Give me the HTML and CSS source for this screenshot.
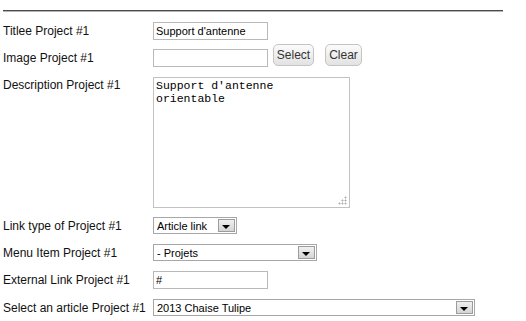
FILE: index.html
```html
<!DOCTYPE html>
<html lang="en">
<head>
    <meta charset="UTF-8">
    <title>Project #1</title>
    <link rel="stylesheet" href="styles.css">
</head>
<body>
    <div class="rule"></div>

    <form class="params">
        <div class="row row-title">
            <label for="title1">Titlee Project #1</label>
            <input type="text" id="title1" class="text-field" value="Support d'antenne">
        </div>

        <div class="row row-image">
            <label for="image1">Image Project #1</label>
            <input type="text" id="image1" class="text-field">
            <button type="button" class="btn btn-select">Select</button>
            <button type="button" class="btn btn-clear">Clear</button>
        </div>

        <div class="row row-desc">
            <label for="desc1">Description Project #1</label>
            <div class="area-wrap">
                <textarea id="desc1" class="area">Support d'antenne
orientable</textarea>
                <span class="grip"></span>
            </div>
        </div>

        <div class="row">
            <label for="linktype1">Link type of Project #1</label>
            <span class="combo combo-small">
                <select id="linktype1"><option>Article link</option></select>
            </span>
        </div>

        <div class="row">
            <label for="menu1">Menu Item Project #1</label>
            <span class="combo combo-mid">
                <select id="menu1"><option>- Projets</option></select>
            </span>
        </div>

        <div class="row">
            <label for="ext1">External Link Project #1</label>
            <input type="text" id="ext1" class="text-field" value="#">
        </div>

        <div class="row">
            <label for="article1">Select an article Project #1</label>
            <span class="combo combo-wide">
                <select id="article1"><option>2013 Chaise Tulipe</option></select>
            </span>
        </div>
    </form>
</body>
</html>
```

FILE: styles.css
```css
body {
    margin: 0;
    padding: 0 0 0 3px;
    background-color: #ffffff;
    color: #000000;
    font-family: "Liberation Sans", Arial, sans-serif;
    font-size: 12px;
}
.rule {
    width: 500px;
    margin-top: 10px;
    border-top: 1px solid #4a4a4a;
    border-bottom: 1px solid #b5b5b5;
}
.params {
    margin-top: 10px;
}
.row {
    display: flex;
    align-items: center;
    margin-bottom: 10px;
}
.row label {
    width: 150px;
    flex-shrink: 0;
    line-height: 14px;
    color: #111;
}
.row-title {
    margin-bottom: 4px;
}
.row-image {
    align-items: flex-end;
}
.row-image label {
    padding-bottom: 2px;
}
.row-desc {
    align-items: flex-start;
    margin-bottom: 9px;
}
.row-desc label {
    padding-top: 1px;
}
.text-field {
    display: block;
    width: 115px;
    height: 18px;
    margin: 0;
    padding: 0 2px;
    box-sizing: border-box;
    border: 1px solid #b9b9b9;
    font-family: "Liberation Sans", Arial, sans-serif;
    font-size: 11px;
    color: #000;
    outline: none;
}
.btn {
    display: block;
    height: 22px;
    margin: 0;
    padding: 0;
    border: 1px solid #c4c4c4;
    border-radius: 5px;
    background: linear-gradient(#fbfbfb, #e2e2e2);
    font-family: "Liberation Sans", Arial, sans-serif;
    font-size: 12px;
    color: #333;
    text-align: center;
    cursor: pointer;
}
.btn-select {
    width: 41px;
    margin-left: 5px;
    margin-bottom: 1px;
}
.btn-clear {
    width: 37px;
    margin-left: 11px;
    margin-bottom: 1px;
}
.area-wrap {
    position: relative;
    width: 197px;
    height: 131px;
}
.area {
    display: block;
    width: 197px;
    height: 131px;
    margin: 0;
    padding: 1px 2px;
    box-sizing: border-box;
    border: 1px solid #c2c2c2;
    resize: none;
    font-family: "Liberation Mono", "Courier New", monospace;
    font-size: 11.5px;
    line-height: 13px;
    color: #000;
    outline: none;
}
.grip {
    position: absolute;
    right: 3px;
    bottom: 3px;
    width: 9px;
    height: 9px;
    background:
        radial-gradient(circle, #b0b0b0 45%, transparent 50%) 6px 0 / 3px 3px no-repeat,
        radial-gradient(circle, #b0b0b0 45%, transparent 50%) 3px 3px / 3px 3px no-repeat,
        radial-gradient(circle, #b0b0b0 45%, transparent 50%) 6px 3px / 3px 3px no-repeat,
        radial-gradient(circle, #b0b0b0 45%, transparent 50%) 0 6px / 3px 3px no-repeat,
        radial-gradient(circle, #b0b0b0 45%, transparent 50%) 3px 6px / 3px 3px no-repeat,
        radial-gradient(circle, #b0b0b0 45%, transparent 50%) 6px 6px / 3px 3px no-repeat;
}
.combo {
    position: relative;
    display: block;
    height: 17px;
}
.combo select {
    display: block;
    appearance: none;
    -webkit-appearance: none;
    width: 100%;
    height: 17px;
    margin: 0;
    padding: 0 20px 0 3px;
    box-sizing: border-box;
    border: 1px solid #a7a7a7;
    border-radius: 0;
    background: #ffffff;
    font-family: "Liberation Sans", Arial, sans-serif;
    font-size: 11px;
    color: #000;
    outline: none;
}
/* arrow box of the combo */
.combo::before {
    content: "";
    position: absolute;
    right: 2px;
    top: 2px;
    width: 15px;
    height: 11px;
    border: 1px solid #9c9c9c;
    background: linear-gradient(#f0f0f0, #d4d4d4);
    pointer-events: none;
}
.combo::after {
    content: "";
    position: absolute;
    right: 7px;
    top: 8px;
    width: 0;
    height: 0;
    border-left: 4px solid transparent;
    border-right: 4px solid transparent;
    border-top: 4px solid #000;
    pointer-events: none;
}
.combo-small {
    width: 84px;
}
.combo-mid {
    width: 164px;
}
.combo-wide {
    width: 322px;
}
```
